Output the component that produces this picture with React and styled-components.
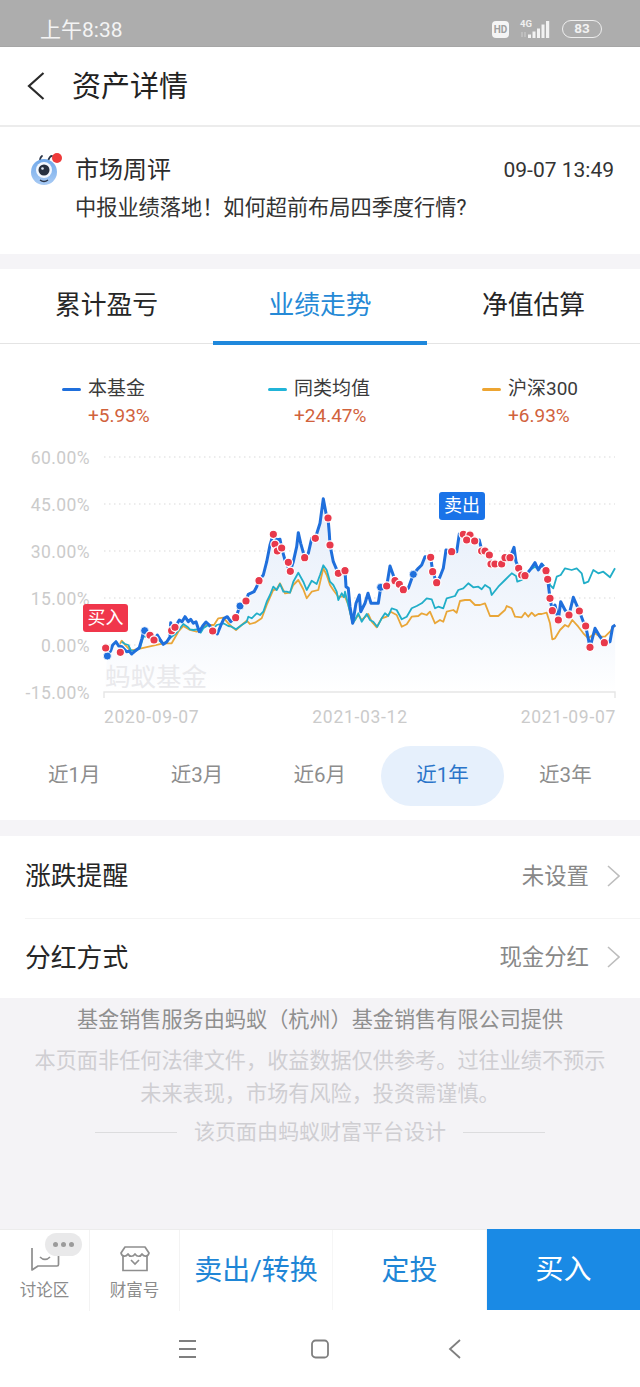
import React from "react";
import styled, { createGlobalStyle } from "styled-components";

const Global = createGlobalStyle`
  html, body { margin: 0; padding: 0; background: #f5f4f7; }
  * { box-sizing: border-box; }
  body { font-family: Roboto, "Noto Sans CJK SC", sans-serif; }
`;

const Page = styled.div`
  width: 640px;
  height: 1387px;
  overflow: hidden;
  display: flex;
  flex-direction: column;
  background: #f5f4f7;
  color: #262626;
`;

const StatusBar = styled.header`
  height: 47px;
  flex: none;
  background: #adadad;
  border-bottom: 1px solid #a6a6a6;
  display: flex;
  align-items: center;
  padding: 12px 38px 0 40px;
  color: #f4f4f4;
`;
const Clock = styled.span`
  font-size: 21px;
  line-height: 24px;
  margin: 1px auto 0 0;
`;
const HdBadge = styled.span`
  width: 17px;
  height: 17px;
  border-radius: 4px;
  background: #f5f5f5;
  color: #a0a0a0;
  font: 700 10px/17px Roboto, sans-serif;
  text-align: center;
  margin-right: 10px;
`;
const Battery = styled.span`
  width: 40px;
  height: 18px;
  border: 1.5px solid #eeeeee;
  border-radius: 9px;
  margin-left: 10px;
  color: #f2f2f2;
  font: 700 13.5px/15px Roboto, sans-serif;
  text-align: center;
`;

const NavBar = styled.nav`
  height: 80px;
  flex: none;
  background: #fff;
  border-bottom: 2px solid #ececec;
  display: flex;
  align-items: center;
  padding: 2px 0 0 27px;
`;
const BackIcon = styled.svg`
  width: 18px;
  height: 28px;
  margin: -2px 27px 0 0;
`;
const Title = styled.h1`
  margin: 0;
  font-size: 29px;
  line-height: 40px;
  font-weight: 400;
  color: #222;
`;

const Notice = styled.section`
  height: 127px;
  flex: none;
  background: #fff;
  display: grid;
  grid-template-columns: 46px 1fr auto;
  grid-template-rows: 38px 38px;
  align-content: start;
  padding: 24px 26px 0 30px;
`;
const NoticeIcon = styled.svg`
  width: 32px;
  height: 38px;
  grid-row: 1 / 3;
  margin-top: -1px;
`;
const NoticeTitle = styled.span`
  font-size: 24px;
  line-height: 38px;
  color: #2c2c2c;
  margin-left: -1px;
`;
const NoticeTime = styled.span`
  font-size: 21px;
  line-height: 38px;
  color: #333;
`;
const NoticeText = styled.span`
  grid-column: 2 / 4;
  font-size: 21.2px;
  line-height: 38px;
  color: #333;
  margin-left: -1px;
`;

const Card = styled.section`
  flex: none;
  background: #fff;
  margin-top: ${(p) => p.$gap}px;
`;

const Tabs = styled.div`
  height: 75px;
  display: grid;
  grid-template-columns: 213px 214px 213px;
  border-bottom: 1px solid #e4e4e4;
`;
const Tab = styled.div`
  font-size: 25.8px;
  line-height: 72px;
  text-align: center;
  color: ${(p) => (p.$active ? "#2589d6" : "#262626")};
  border-bottom: ${(p) => (p.$active ? "4px solid #1f88dc" : "none")};
  margin-bottom: -1px;
`;

const Legend = styled.div`
  height: 101px;
  display: grid;
  grid-template-columns: 206px 214px 1fr;
  padding: 31px 0 0 62px;
  align-content: start;
`;
const LegendItem = styled.div`
  display: grid;
  grid-template-columns: 26px 1fr;
  grid-template-rows: 28px 26px;
  align-items: center;
`;
const LegendDash = styled.i`
  width: 19px;
  height: 3px;
  border-radius: 2px;
  background: ${(p) => p.$color};
`;
const LegendName = styled.span`
  font-size: 19px;
  color: #3b3b3b;
  line-height: 28px;
`;
const LegendPct = styled.span`
  grid-column: 2;
  font-size: 19px;
  color: #d1623c;
  line-height: 26px;
`;

const ChartWrap = styled.div`
  position: relative;
  height: 301px;
`;
const ChartSvg = styled.svg`
  display: block;
  width: 640px;
  height: 301px;
`;
const AxisText = styled.text`
  font-family: Roboto, sans-serif;
  font-size: 17.5px;
  letter-spacing: ${(p) => (p.$wide ? "0.7px" : "0.4px")};
  fill: #cbcbcb;
`;
const Watermark = styled.text`
  font-family: "Noto Sans CJK SC", sans-serif;
  font-size: 25.5px;
  fill: #e9e9ec;
`;
const TradeBadge = styled.div`
  position: absolute;
  left: ${(p) => p.$left}px;
  top: ${(p) => p.$top}px;
  width: ${(p) => p.$width}px;
  height: 28px;
  border-radius: 3px;
  background: ${(p) => p.$bg};
  color: #fff;
  font-size: 18px;
  line-height: 27px;
  text-align: center;
`;

const Periods = styled.div`
  height: 74px;
  display: grid;
  grid-template-columns: repeat(5, 122.8px);
  padding: 0 0 14px 12.8px;
`;
const Period = styled.div`
  font-size: 20.5px;
  line-height: 58px;
  height: 60px;
  text-align: center;
  border-radius: 30px;
  color: ${(p) => (p.$active ? "#2a74c9" : "#8d8d8d")};
  background: ${(p) => (p.$active ? "#e6f0fc" : "transparent")};
`;

const SettingRow = styled.div`
  height: ${(p) => p.$h}px;
  margin-left: 25px;
  padding: 0 20px 0 0;
  display: flex;
  align-items: center;
  border-bottom: ${(p) => (p.$line ? "1px solid #f4f4f4" : "none")};
`;
const RowLabel = styled.span`
  font-size: 25.8px;
  color: #262626;
  margin: -7px auto 0 0;
`;
const RowValue = styled.span`
  font-size: 22.4px;
  color: #888;
  margin-top: -7px;
`;
const Chevron = styled.svg`
  width: 13px;
  height: 22px;
  margin: -3px 0 0 18px;
`;

const Footer = styled.footer`
  flex: 1;
  background: #f4f3f6;
  text-align: center;
  padding-top: 5px;
`;
const FooterLead = styled.div`
  font-size: 21.15px;
  line-height: 34px;
  color: #8f8f8f;
`;
const FooterNote = styled.div`
  font-size: 21.15px;
  line-height: 33px;
  margin-top: 7px;
  color: #cfced2;
`;
const FooterBrand = styled.div`
  margin-top: 5px;
  display: flex;
  justify-content: center;
  align-items: center;
  gap: 17px;
  font-size: 21px;
  line-height: 34px;
  color: #cfced2;
  &::before, &::after {
    content: "";
    width: 82px;
    height: 1px;
    background: #dcdcde;
  }
`;

const ActionBar = styled.div`
  height: 81px;
  flex: none;
  background: #fff;
  border-top: 1px solid #ececec;
  display: grid;
  grid-template-columns: 90px 90px 153px 154px 153px;
`;
const ToolCell = styled.div`
  position: relative;
  border-right: 1px solid #f3f3f3;
  display: flex;
  flex-direction: column;
  align-items: center;
  padding-top: 16px;
`;
const ToolIcon = styled.svg`
  width: 30px;
  height: 26px;
  display: block;
`;
const ToolLabel = styled.span`
  font-size: 16.5px;
  line-height: 22px;
  color: #8b8b8b;
  margin-top: 8px;
`;
const MoreBubble = styled.div`
  position: absolute;
  left: 45px;
  top: 3px;
  width: 37px;
  height: 23px;
  border-radius: 12px;
  background: #e9e9ea;
  display: flex;
  align-items: center;
  justify-content: center;
  gap: 3px;
`;
const MoreDot = styled.i`
  width: 5px;
  height: 5px;
  border-radius: 50%;
  background: #9b9b9b;
`;
const ActionButton = styled.div`
  font-size: 28px;
  line-height: 81px;
  text-align: center;
  color: ${(p) => (p.$primary ? "#fff" : "#1f86d6")};
  background: ${(p) => (p.$primary ? "#1a8ae5" : "#fff")};
  border-right: ${(p) => (p.$primary ? "none" : "1px solid #f6f6f6")};
  margin-top: ${(p) => (p.$primary ? "-1px" : "0")};
`;

const SystemBar = styled.div`
  height: 77px;
  flex: none;
  background: #fff;
  display: grid;
  grid-template-columns: repeat(3, 20px);
  column-gap: 113px;
  justify-content: center;
  padding-top: 29px;
`;
const SysIcon = styled.svg`
  width: 20px;
  height: 20px;
`;

const z = (ox, flat) => {
  const out = [];
  for (let i = 0; i < flat.length; i += 2) {
    out.push([ox + flat[i] / 3, 490 + flat[i + 1] / 3]);
  }
  return out;
};

const blue = [
  ...z(100, [22,498,32,482,38,465,48,455,56,468,66,470,80,485,88,483,95,492,104,484,118,473,126,445,130,428,138,420,150,432,162,450,172,435,180,448,190,463,200,456,210,440,212,398,218,420,225,412,238,390,246,395,255,380,265,395,272,388,280,400,288,395,298,425,308,408,318,396,328,405,338,423,352,432,365,400,372,385,382,380,392,395,407,383,420,348,438,333,445,313,462,305,470,290,477,272,490,255,500,215,510,165,520,133]),
  ...z(270, [20,150,30,148,35,175,45,210,60,245,70,215,80,170,85,128,92,160,104,203,115,190,125,145,136,145,150,100,160,26,168,70,174,84,178,130,180,165,190,215,205,250,225,242,228,290,235,295,240,350,248,400,258,340,268,315,272,365,285,340,294,310,303,340,325,340,332,292,350,288,360,228,375,270,388,283,400,299,415,295,430,253,445,235,455,225,465,200,482,202,488,245,500,278,510,260,520,235,528,180]),
  ...z(440, [35,185,50,185,58,132,70,132,90,135,104,152,118,150,125,180,135,183,148,195,155,222,165,222,185,222,195,203,210,203,222,172,228,215,237,235,245,255,255,257,270,240,285,218,295,240,305,222,318,242,323,268,330,325,337,362,345,345,355,390,362,335,375,360,387,375,400,322,418,363,430,395,437,408,450,472,465,415,480,440,493,458,510,455,518,410,526,405]),
];
const teal = [
  ...z(100, [65,455,75,462,85,465,92,480,105,484,120,475,130,440,150,440,170,445,190,462,205,450,215,440,228,430,240,415,250,402,262,410,270,418,280,420,292,418,302,428,310,415,325,405,338,420,350,405,370,400,385,408,395,410,408,418,425,405,440,395,445,380,455,385,470,370,480,375,490,365,500,335]),
  ...z(270, [0,315,10,290,20,300,30,282,40,305,50,305,60,308,70,275,85,248,100,275,110,300,125,272,140,282,150,255,160,226,170,240,180,275,190,285,200,305,205,330,215,310,222,322,225,305,235,345,248,400,255,390,265,370,275,395,290,372,300,390,310,395,322,410,335,385,345,370,355,378,365,355,380,360,395,388,410,380,425,355,440,348,455,340,470,325,485,328,495,355,505,350]),
  ...z(440, [10,355,20,325,45,318,55,300,70,295,85,280,100,292,115,290,125,298,135,285,150,295,155,315,175,290,195,270,215,250,228,258,232,275,245,270,270,240,285,230,295,238,310,225,320,245,330,285,340,295,350,260,362,255,375,235,395,240,410,235,425,250,432,280,445,275,460,240,475,250,490,245,510,262,525,235]),
];
const orange = [
  ...z(100, [60,462,65,452,80,470,92,482,120,476,190,460,215,460,235,425,250,408,270,420,290,425,300,420,320,405,342,405,355,385,370,383,385,400,395,410,408,420,425,405,440,392,450,402,465,398,485,385,500,345]),
  ...z(270, [0,322,10,300,20,298,30,280,45,310,60,308,70,285,85,270,100,298,110,325,125,305,145,300,160,235,170,255,180,285,190,300,205,320,225,320,235,345,248,400,258,385,265,375,275,390,295,372,305,395,320,412,335,385,350,380,362,365,380,375,395,410,410,403,425,380,445,378,455,370,470,375,480,365,495,400]),
  ...z(440, [0,390,10,395,20,365,40,360,50,368,60,333,75,330,90,330,105,345,120,345,135,340,150,378,175,378,195,360,200,348,215,355,225,380,245,382,255,368,265,380,275,368,285,378,295,372,305,372,320,368,330,400,337,448,345,445,360,420,375,405,385,410,397,390,415,410,430,430,445,445,465,430,480,440,495,440,510,425,525,405]),
];
const redDots = [
  ...z(100, [17,474,61,487,150,436,162,450,215,422,225,412,338,423,407,383,438,333,477,272,520,133,525,163,532,183]),
  ...z(270, [35,174,55,217,61,244,104,203,136,145,174,84,180,165,205,250,225,242,350,288,375,272,388,283,400,299,482,202,488,245,500,278]),
  ...z(440, [35,185,70,133,90,135,80,150,104,153,125,183,135,183,148,195,153,222,165,222,185,222,195,203,210,203,236,235,245,255,255,257,318,242,323,268,330,325,337,362,355,390,387,375,418,363,437,408,450,472,493,458]),
];
const blueDots = [...z(100, [22,498,420,348,134,422]), ...z(270, [430,253,332,292])];

const toPath = (pts) => pts.map(([x, y]) => `${x.toFixed(1)},${y.toFixed(1)}`).join(" ");
const areaPath = `104,692 ${toPath(blue)} 615,692`;

const gridRows = [
  { y: 457, label: "60.00%" },
  { y: 504, label: "45.00%" },
  { y: 551, label: "30.00%" },
  { y: 598, label: "15.00%" },
  { y: 645, label: "0.00%" },
];

function Chart() {
  return (
    <ChartSvg viewBox="0 445 640 301">
      <defs>
        <linearGradient id="area" x1="0" y1="0" x2="0" y2="1">
          <stop offset="0" stopColor="#e6eefa" />
          <stop offset="0.7" stopColor="#f5f8fd" />
          <stop offset="1" stopColor="#ffffff" />
        </linearGradient>
      </defs>
      {gridRows.map((r) => (
        <g key={r.y}>
          <line x1="104" x2="615" y1={r.y} y2={r.y} stroke="#e6e6e6" strokeWidth="1.4" strokeDasharray="1.5 3.5" />
          <AxisText x="90" y={r.y + 7} textAnchor="end">{r.label}</AxisText>
        </g>
      ))}
      <AxisText x="90" y="699" textAnchor="end">-15.00%</AxisText>
      <polygon points={areaPath} fill="url(#area)" />
      <Watermark x="105" y="686">蚂蚁基金</Watermark>
      <path d="M104 698V692H615V698" fill="none" stroke="#e6e6e6" strokeWidth="1.4" />
      <AxisText $wide x="104" y="723">2020-09-07</AxisText>
      <AxisText $wide x="360" y="723" textAnchor="middle">2021-03-12</AxisText>
      <AxisText $wide x="616" y="723" textAnchor="end">2021-09-07</AxisText>
      <polyline points={toPath(orange)} fill="none" stroke="#e9a638" strokeWidth="1.8" strokeLinejoin="round" />
      <polyline points={toPath(teal)} fill="none" stroke="#21aec8" strokeWidth="1.8" strokeLinejoin="round" />
      <polyline points={toPath(blue)} fill="none" stroke="#1f6fdc" strokeWidth="3" strokeLinejoin="round" />
      {blueDots.map(([x, y], i) => (
        <circle key={i} cx={x} cy={y} r="4" fill="#1f6fdc" stroke="#fff" strokeWidth="0.8" />
      ))}
      {redDots.map(([x, y], i) => (
        <circle key={i} cx={x} cy={y} r="4.2" fill="#e8394b" stroke="#fff" strokeWidth="1.2" />
      ))}
    </ChartSvg>
  );
}

const periods = ["近1月", "近3月", "近6月", "近1年", "近3年"];

const noticeText = "中报业绩落地\uFF01如何超前布局四季度行情?";
const footerLead = "基金销售服务由蚂蚁\uFF08杭州\uFF09基金销售有限公司提供";
const footerNoteA = "本页面非任何法律文件\uFF0C收益数据仅供参考。过往业绩不预示";
const footerNoteB = "未来表现\uFF0C市场有风险\uFF0C投资需谨慎。";

export default function App() {
  return (
    <Page>
      <Global />
      <StatusBar>
        <Clock>上午8:38</Clock>
        <HdBadge>HD</HdBadge>
        <svg width="33" height="20" viewBox="0 0 33 20">
          <text x="1" y="8" fontSize="9.5" fontWeight="700" fontFamily="Roboto, sans-serif" fill="#f0f0f0">4G</text>
          <path d="M3 13v5M6 18v-5" stroke="#cfcfcf" strokeWidth="1" />
          <path d="M9 15.500h3v3.500H9zM13.500 12.500h3v6.500h-3zM18 9.500h3v9.500h-3zM22.500 5.500h3v13.500h-3zM27 2h3.200v17H27z" fill="#f2f2f2" />
        </svg>
        <Battery>83</Battery>
      </StatusBar>
      <NavBar>
        <BackIcon viewBox="0 0 18 28">
          <path d="M16.500 1L2 14l14.500 13" fill="none" stroke="#2a2a2a" strokeWidth="2.200" />
        </BackIcon>
        <Title>资产详情</Title>
      </NavBar>
      <Notice>
        <NoticeIcon viewBox="0 0 32 38">
          <defs>
            <linearGradient id="ant" x1="0" y1="0" x2="0" y2="1">
              <stop offset="0" stopColor="#6fa8ea" />
              <stop offset="1" stopColor="#a9cbf4" />
            </linearGradient>
          </defs>
          <path d="M10 11c0-3 .5-4 2-5M18 11c1-3 2-5 4-5" fill="none" stroke="#2b3548" strokeWidth="1.800" strokeLinecap="round" />
          <circle cx="14" cy="22" r="13" fill="url(#ant)" />
          <circle cx="14" cy="20" r="8" fill="#f4f8fe" />
          <circle cx="14" cy="20" r="5.500" fill="#27303f" />
          <circle cx="12.500" cy="18.500" r="1.300" fill="#dfe8f5" />
          <path d="M10 30q4 3 8 0" fill="none" stroke="#2b3548" strokeWidth="1.300" />
          <circle cx="27" cy="8" r="5" fill="#ee3a3a" />
        </NoticeIcon>
        <NoticeTitle>市场周评</NoticeTitle>
        <NoticeTime>09-07 13:49</NoticeTime>
        <NoticeText>{noticeText}</NoticeText>
      </Notice>
      <Card $gap={15}>
        <Tabs>
          <Tab>累计盈亏</Tab>
          <Tab $active>业绩走势</Tab>
          <Tab>净值估算</Tab>
        </Tabs>
        <Legend>
          <LegendItem>
            <LegendDash $color="#1f6fdc" />
            <LegendName>本基金</LegendName>
            <LegendPct>+5.93%</LegendPct>
          </LegendItem>
          <LegendItem>
            <LegendDash $color="#21b4d8" />
            <LegendName>同类均值</LegendName>
            <LegendPct>+24.47%</LegendPct>
          </LegendItem>
          <LegendItem>
            <LegendDash $color="#eda532" />
            <LegendName>沪深300</LegendName>
            <LegendPct>+6.93%</LegendPct>
          </LegendItem>
        </Legend>
        <ChartWrap>
          <Chart />
          <TradeBadge $left={83} $top={159} $width={45} $bg="#f0364b">买入</TradeBadge>
          <TradeBadge $left={439} $top={47} $width={46} $bg="#1a73e8">卖出</TradeBadge>
        </ChartWrap>
        <Periods>
          {periods.map((p) => (
            <Period key={p} $active={p === "近1年"}>{p}</Period>
          ))}
        </Periods>
      </Card>
      <Card $gap={16}>
        <SettingRow $h={83} $line>
          <RowLabel>涨跌提醒</RowLabel>
          <RowValue>未设置</RowValue>
          <Chevron viewBox="0 0 13 22"><path d="M1 1l11 10L1 21" fill="none" stroke="#bdbdbd" strokeWidth="1.600" /></Chevron>
        </SettingRow>
        <SettingRow $h={79}>
          <RowLabel>分红方式</RowLabel>
          <RowValue>现金分红</RowValue>
          <Chevron viewBox="0 0 13 22"><path d="M1 1l11 10L1 21" fill="none" stroke="#bdbdbd" strokeWidth="1.600" /></Chevron>
        </SettingRow>
      </Card>
      <Footer>
        <FooterLead>{footerLead}</FooterLead>
        <FooterNote>{footerNoteA}<br />{footerNoteB}</FooterNote>
        <FooterBrand>该页面由蚂蚁财富平台设计</FooterBrand>
      </Footer>
      <ActionBar>
        <ToolCell>
          <ToolIcon viewBox="0 0 30 26">
            <path d="M2 2v22l6-4h19a1.500 1.500 0 0 0 1.500-1.500V3" fill="none" stroke="#8e8e8e" strokeWidth="1.700" strokeLinejoin="round" />
            <path d="M10 11q5 5 10 0" fill="none" stroke="#8e8e8e" strokeWidth="1.700" />
          </ToolIcon>
          <ToolLabel>讨论区</ToolLabel>
          <MoreBubble><MoreDot /><MoreDot /><MoreDot /></MoreBubble>
        </ToolCell>
        <ToolCell>
          <ToolIcon viewBox="0 0 30 26">
            <path d="M3 10v14.500h24V10" fill="none" stroke="#8e8e8e" strokeWidth="1.700" />
            <path d="M5 1h20l4 6c-1 4-5 4-7 1-1.500 3-5 3-7 0-2 3-5.500 3-7 0-2 3-6 3-7-1z" fill="none" stroke="#8e8e8e" strokeWidth="1.700" strokeLinejoin="round" />
            <path d="M11 14l4 4 4-4" fill="none" stroke="#8e8e8e" strokeWidth="1.700" />
          </ToolIcon>
          <ToolLabel>财富号</ToolLabel>
        </ToolCell>
        <ActionButton>卖出/转换</ActionButton>
        <ActionButton>定投</ActionButton>
        <ActionButton $primary>买入</ActionButton>
      </ActionBar>
      <SystemBar>
        <SysIcon viewBox="0 0 20 20">
          <path d="M2 2h17M2 10h17M2 18h17" stroke="#7f7f7f" strokeWidth="1.800" />
        </SysIcon>
        <SysIcon viewBox="0 0 20 20">
          <rect x="2" y="1.500" width="16" height="17" rx="3.500" fill="none" stroke="#7f7f7f" strokeWidth="1.800" />
        </SysIcon>
        <SysIcon viewBox="0 0 20 20">
          <path d="M17 1L7 10l10 9" fill="none" stroke="#7f7f7f" strokeWidth="1.800" />
        </SysIcon>
      </SystemBar>
    </Page>
  );
}
